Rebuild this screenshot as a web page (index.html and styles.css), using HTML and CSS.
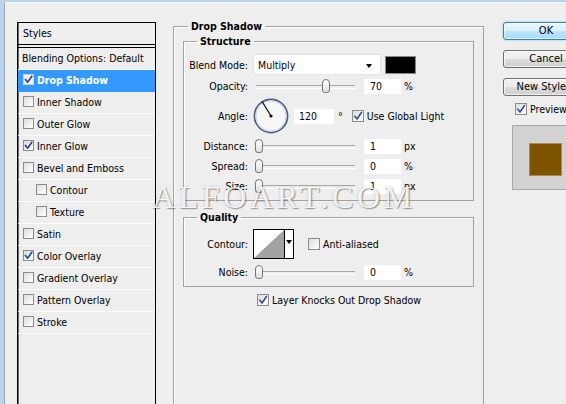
FILE: index.html
```html
<!DOCTYPE html>
<html>
<head>
<meta charset="utf-8">
<title>Layer Style</title>
<link rel="stylesheet" href="styles.css">
</head>
<body>
<div class="win">
  <div class="styles-panel">
    <div class="sp-head">Styles</div>
    <div class="sp-list">
      <div class="sp-row plain">Blending Options: Default</div>
      <div class="sp-row sel"><span class="cb on"><svg viewBox="0 0 9 9"><path d="M1.5 4.5 L3.6 7.2 L7.8 1.2" /></svg></span>Drop Shadow</div>
      <div class="sp-row"><span class="cb"></span>Inner Shadow</div>
      <div class="sp-row"><span class="cb"></span>Outer Glow</div>
      <div class="sp-row"><span class="cb on"><svg viewBox="0 0 9 9"><path d="M1.5 4.5 L3.6 7.2 L7.8 1.2" /></svg></span>Inner Glow</div>
      <div class="sp-row"><span class="cb"></span>Bevel and Emboss</div>
      <div class="sp-row sub"><span class="cb"></span>Contour</div>
      <div class="sp-row sub"><span class="cb"></span>Texture</div>
      <div class="sp-row"><span class="cb"></span>Satin</div>
      <div class="sp-row"><span class="cb on"><svg viewBox="0 0 9 9"><path d="M1.5 4.5 L3.6 7.2 L7.8 1.2" /></svg></span>Color Overlay</div>
      <div class="sp-row"><span class="cb"></span>Gradient Overlay</div>
      <div class="sp-row"><span class="cb"></span>Pattern Overlay</div>
      <div class="sp-row"><span class="cb"></span>Stroke</div>
    </div>
  </div>

  <fieldset class="main">
    <legend class="lg-main">Drop Shadow</legend>
    <fieldset class="group structure">
      <legend>Structure</legend>
      <div class="row r-blend">
        <span class="lbl">Blend Mode:</span>
        <div class="select">Multiply<span class="arrow"></span></div>
        <div class="swatch"></div>
      </div>
      <div class="row r-first">
        <span class="lbl">Opacity:</span>
        <div class="slider"><i class="thumb" style="left:69px"></i></div>
        <span class="field">70</span><span class="unit">%</span>
      </div>
      <div class="row r-angle">
        <span class="lbl">Angle:</span>
        <svg class="dial" width="36" height="36" viewBox="0 0 36 36">
          <circle cx="18" cy="18" r="16.6" fill="#f7f7f7" stroke="#4b5f80" stroke-width="1.7"/>
          <circle cx="18" cy="18" r="15.1" fill="none" stroke="#c9d3e2" stroke-width="1"/>
          <line x1="18" y1="18" x2="9" y2="3.4" stroke="#000" stroke-width="1.1"/>
          <circle cx="18" cy="18" r="1.6" fill="#000"/>
        </svg>
        <span class="field angle">120</span><span class="deg">°</span>
        <span class="cb big on"><svg viewBox="0 0 11 11"><path d="M2 5.6 L4.4 8.8 L9.3 1.6" /></svg></span>
        <span class="cbl">Use Global Light</span>
      </div>
      <div class="row">
        <span class="lbl">Distance:</span>
        <div class="slider"><i class="thumb" style="left:2px"></i></div>
        <span class="field">1</span><span class="unit">px</span>
      </div>
      <div class="row">
        <span class="lbl">Spread:</span>
        <div class="slider"><i class="thumb" style="left:2px"></i></div>
        <span class="field">0</span><span class="unit">%</span>
      </div>
      <div class="row">
        <span class="lbl">Size:</span>
        <div class="slider"><i class="thumb" style="left:2px"></i></div>
        <span class="field">1</span><span class="unit">px</span>
      </div>
    </fieldset>

    <fieldset class="group quality">
      <legend>Quality</legend>
      <div class="row r-contour">
        <span class="lbl">Contour:</span>
        <div class="contour">
          <svg width="30" height="28" viewBox="0 0 30 28"><rect width="30" height="28" fill="#fff"/><polygon points="0,28 30,0 30,28" fill="#a3a3a3"/></svg>
          <span class="c-drop"><span class="arrow"></span></span>
        </div>
        <span class="cb big"></span>
        <span class="cbl">Anti-aliased</span>
      </div>
      <div class="row r-noise">
        <span class="lbl">Noise:</span>
        <div class="slider"><i class="thumb" style="left:2px"></i></div>
        <span class="field">0</span><span class="unit">%</span>
      </div>
    </fieldset>

    <div class="knocks">
      <span class="cb big on"><svg viewBox="0 0 11 11"><path d="M2 5.6 L4.4 8.8 L9.3 1.6" /></svg></span>
      <span class="cbl">Layer Knocks Out Drop Shadow</span>
    </div>
  </fieldset>

  <div class="side">
    <div class="btn ok">OK</div>
    <div class="btn">Cancel</div>
    <div class="btn">New Style...</div>
    <div class="pv-row">
      <span class="cb big on"><svg viewBox="0 0 11 11"><path d="M2 5.6 L4.4 8.8 L9.3 1.6" /></svg></span>
      <span class="cbl">Preview</span>
    </div>
    <div class="preview"><div class="pv-swatch"></div></div>
  </div>
</div>
<div class="watermark">ALFOART.COM</div>
</body>
</html>
```

FILE: styles.css
```css
* { box-sizing: border-box; }
html, body { margin: 0; padding: 0; }
body {
  width: 566px;
  height: 404px;
  overflow: hidden;
  position: relative;
  background: #bcd3ec;
  font-family: "DejaVu Sans Condensed", "DejaVu Sans", sans-serif;
  font-size: 10.5px;
  color: #000;
}

.win {
  display: flex;
  align-items: flex-start;
  height: 402px;
  overflow: hidden;
  margin: 2px 0 0 4px;
  background: #eeeeee;
  border-left: 1px solid #97a3b1;
  border-top: 1px solid #f6f6f6;
}

/* ---------- styles list ---------- */
.styles-panel {
  flex: none;
  width: 139px;
  height: 400px;
  margin: 19px 0 0 12px;
  border: 1px solid #000;
  background: #eeeeee;
  box-shadow: inset 1px 0 0 #6a6a6a;
}
.sp-head {
  height: 22px;
  line-height: 20px;
  padding-left: 5px;
  border-bottom: 1px solid #000;
}
.sp-list {
  margin-top: 2px;
  border-top: 1px solid #000;
}
.sp-row {
  display: flex;
  align-items: center;
  height: 22px;
  padding: 0 0 2px 5px;
  border-bottom: 1px solid #fbfbfb;
  white-space: nowrap;
}
.sp-row.plain { padding-left: 4px; }
.sp-row.sub { padding-left: 18px; }
.sp-row.sel {
  background: #3399ff;
  color: #fff;
  font-weight: bold;
  border-bottom-color: #3399ff;
}

/* ---------- checkbox ---------- */
.cb {
  flex: none;
  display: inline-block;
  width: 11px;
  height: 11px;
  margin-right: 3px;
  border: 1px solid #8c8c8c;
  background: linear-gradient(135deg, #dcdcdc, #f6f6f6 70%, #ffffff);
  position: relative;
}
.cb.big { width: 12px; height: 12px; }
.cb svg {
  position: absolute;
  left: 0; top: 0;
  width: 100%; height: 100%;
}
.cb svg path {
  fill: none;
  stroke: #2d4a93;
  stroke-width: 1.7;
  stroke-linecap: round;
  stroke-linejoin: round;
}
.sel .cb { border-color: #d0d0d0; background: #f4f4f4; }

/* ---------- main fieldset ---------- */
fieldset { margin: 0; min-width: 0; }
legend {
  font-weight: bold;
  line-height: 13px;
  padding: 0 3px;
}
.main {
  flex: none;
  width: 311px;
  height: 400px;
  margin: 17px 0 0 17px;
  padding: 0 9px;
  border: 1px solid #a2a2a2;
  box-shadow: inset 1px 1px 0 #fdfdfd;
}
.lg-main { margin-left: 5px; }

.group {
  padding: 0 0 6px 0;
  border: 1px solid #a2a2a2;
  box-shadow: inset 1px 1px 0 #fdfdfd;
}
.group legend { margin-left: 13px; }
.structure { margin-top: 2px; }
.quality { margin-top: 10px; }

.row {
  display: flex;
  align-items: center;
  height: 16px;
  margin-top: 4px;
  white-space: nowrap;
}
.lbl {
  flex: none;
  width: 64px;
  margin-right: 5px;
  text-align: right;
}
.r-blend { height: 21px; margin-top: 6px; }
.r-first { margin-top: 3px; }
.r-angle { height: 36px; }
.r-contour { height: 30px; margin-top: 5px; }
.r-noise { margin-top: 5px; }

.select {
  position: relative;
  width: 128px;
  height: 21px;
  line-height: 21px;
  padding-left: 4px;
  background: #fff;
  border: 1px solid #e4e4e4;
}
.arrow {
  position: absolute;
  width: 0; height: 0;
  border-left: 3.5px solid transparent;
  border-right: 3.5px solid transparent;
  border-top: 4px solid #000;
}
.select .arrow { right: 8px; top: 9px; }
.swatch {
  width: 31px;
  height: 18px;
  margin-left: 4px;
  background: #000;
  border: 1px solid #8a8a8a;
}

.slider {
  position: relative;
  flex: none;
  width: 102px;
  height: 16px;
}
.slider::before {
  content: "";
  position: absolute;
  left: 3px; right: 0;
  top: 7px;
  height: 2px;
  border-top: 1px solid #a8a8a8;
  border-bottom: 1px solid #ffffff;
}
.thumb {
  position: absolute;
  top: 1px;
  width: 8px;
  height: 14px;
  border: 1px solid #777;
  border-radius: 4px 4px 3px 3px;
  background: linear-gradient(#ffffff, #dedede);
}
.field {
  flex: none;
  width: 37px;
  height: 15px;
  line-height: 15px;
  margin-left: 9px;
  padding-left: 6px;
  background: #fff;
}
.unit { margin-left: 3px; }

.dial { flex: none; }
.field.angle { width: 40px; margin-left: 5px; padding-left: 5px; }
.deg { margin-left: 4px; margin-right: 9px; }
.cbl { white-space: nowrap; }

.contour {
  position: relative;
  display: flex;
  width: 41px;
  height: 30px;
  border: 1px solid #000;
  background: #fff;
}
.contour svg { display: block; }
.c-drop {
  position: relative;
  width: 9px;
  border-left: 1px solid #000;
}
.c-drop .arrow { left: 1px; top: 10px; }
.r-contour .cb { margin-left: 14px; }

.knocks {
  display: flex;
  align-items: center;
  height: 13px;
  margin: 6px 0 0 74px;
}

/* ---------- right side ---------- */
.side {
  flex: none;
  width: 90px;
  margin: 19px 0 0 19px;
}
.btn {
  width: 86px;
  height: 18px;
  line-height: 16px;
  margin-bottom: 10px;
  text-align: center;
  font-size: 11px;
  border: 1px solid #707070;
  border-radius: 3px;
  background: linear-gradient(#f3f3f3 0%, #ebebeb 50%, #dddddd 50%, #cfcfcf 100%);
  box-shadow: inset 0 0 0 1px rgba(255,255,255,.7);
}
.btn.ok {
  border-color: #3c7fb1;
  background: linear-gradient(#eaf6fd 0%, #d9f0fc 50%, #bee6fd 50%, #a7d9f5 100%);
  box-shadow: 0 0 2px #5ec0f0, inset 0 0 0 1px rgba(255,255,255,.6);
}
.pv-row {
  display: flex;
  align-items: center;
  height: 13px;
  margin: -4px 0 0 12px;
}
.preview {
  width: 66px;
  height: 65px;
  margin: 10px 0 0 9px;
  padding: 17px 0 0 16px;
  background: #d2d2d2;
  border: 1px solid #a9a9a9;
}
.pv-swatch {
  width: 33px;
  height: 33px;
  background: #7d5300;
  border: 1px solid #a98a4c;
}

/* ---------- watermark ---------- */
.watermark {
  position: absolute;
  left: 152px;
  top: 181px;
  font-family: "Liberation Serif", serif;
  font-size: 32px;
  line-height: 32px;
  letter-spacing: 3.6px;
  color: rgba(255, 255, 255, 0.88);
  text-shadow: 1px 1px 1px rgba(0,0,0,.35), 0 0 3px rgba(0,0,0,.18);
  white-space: nowrap;
  pointer-events: none;
}
```
